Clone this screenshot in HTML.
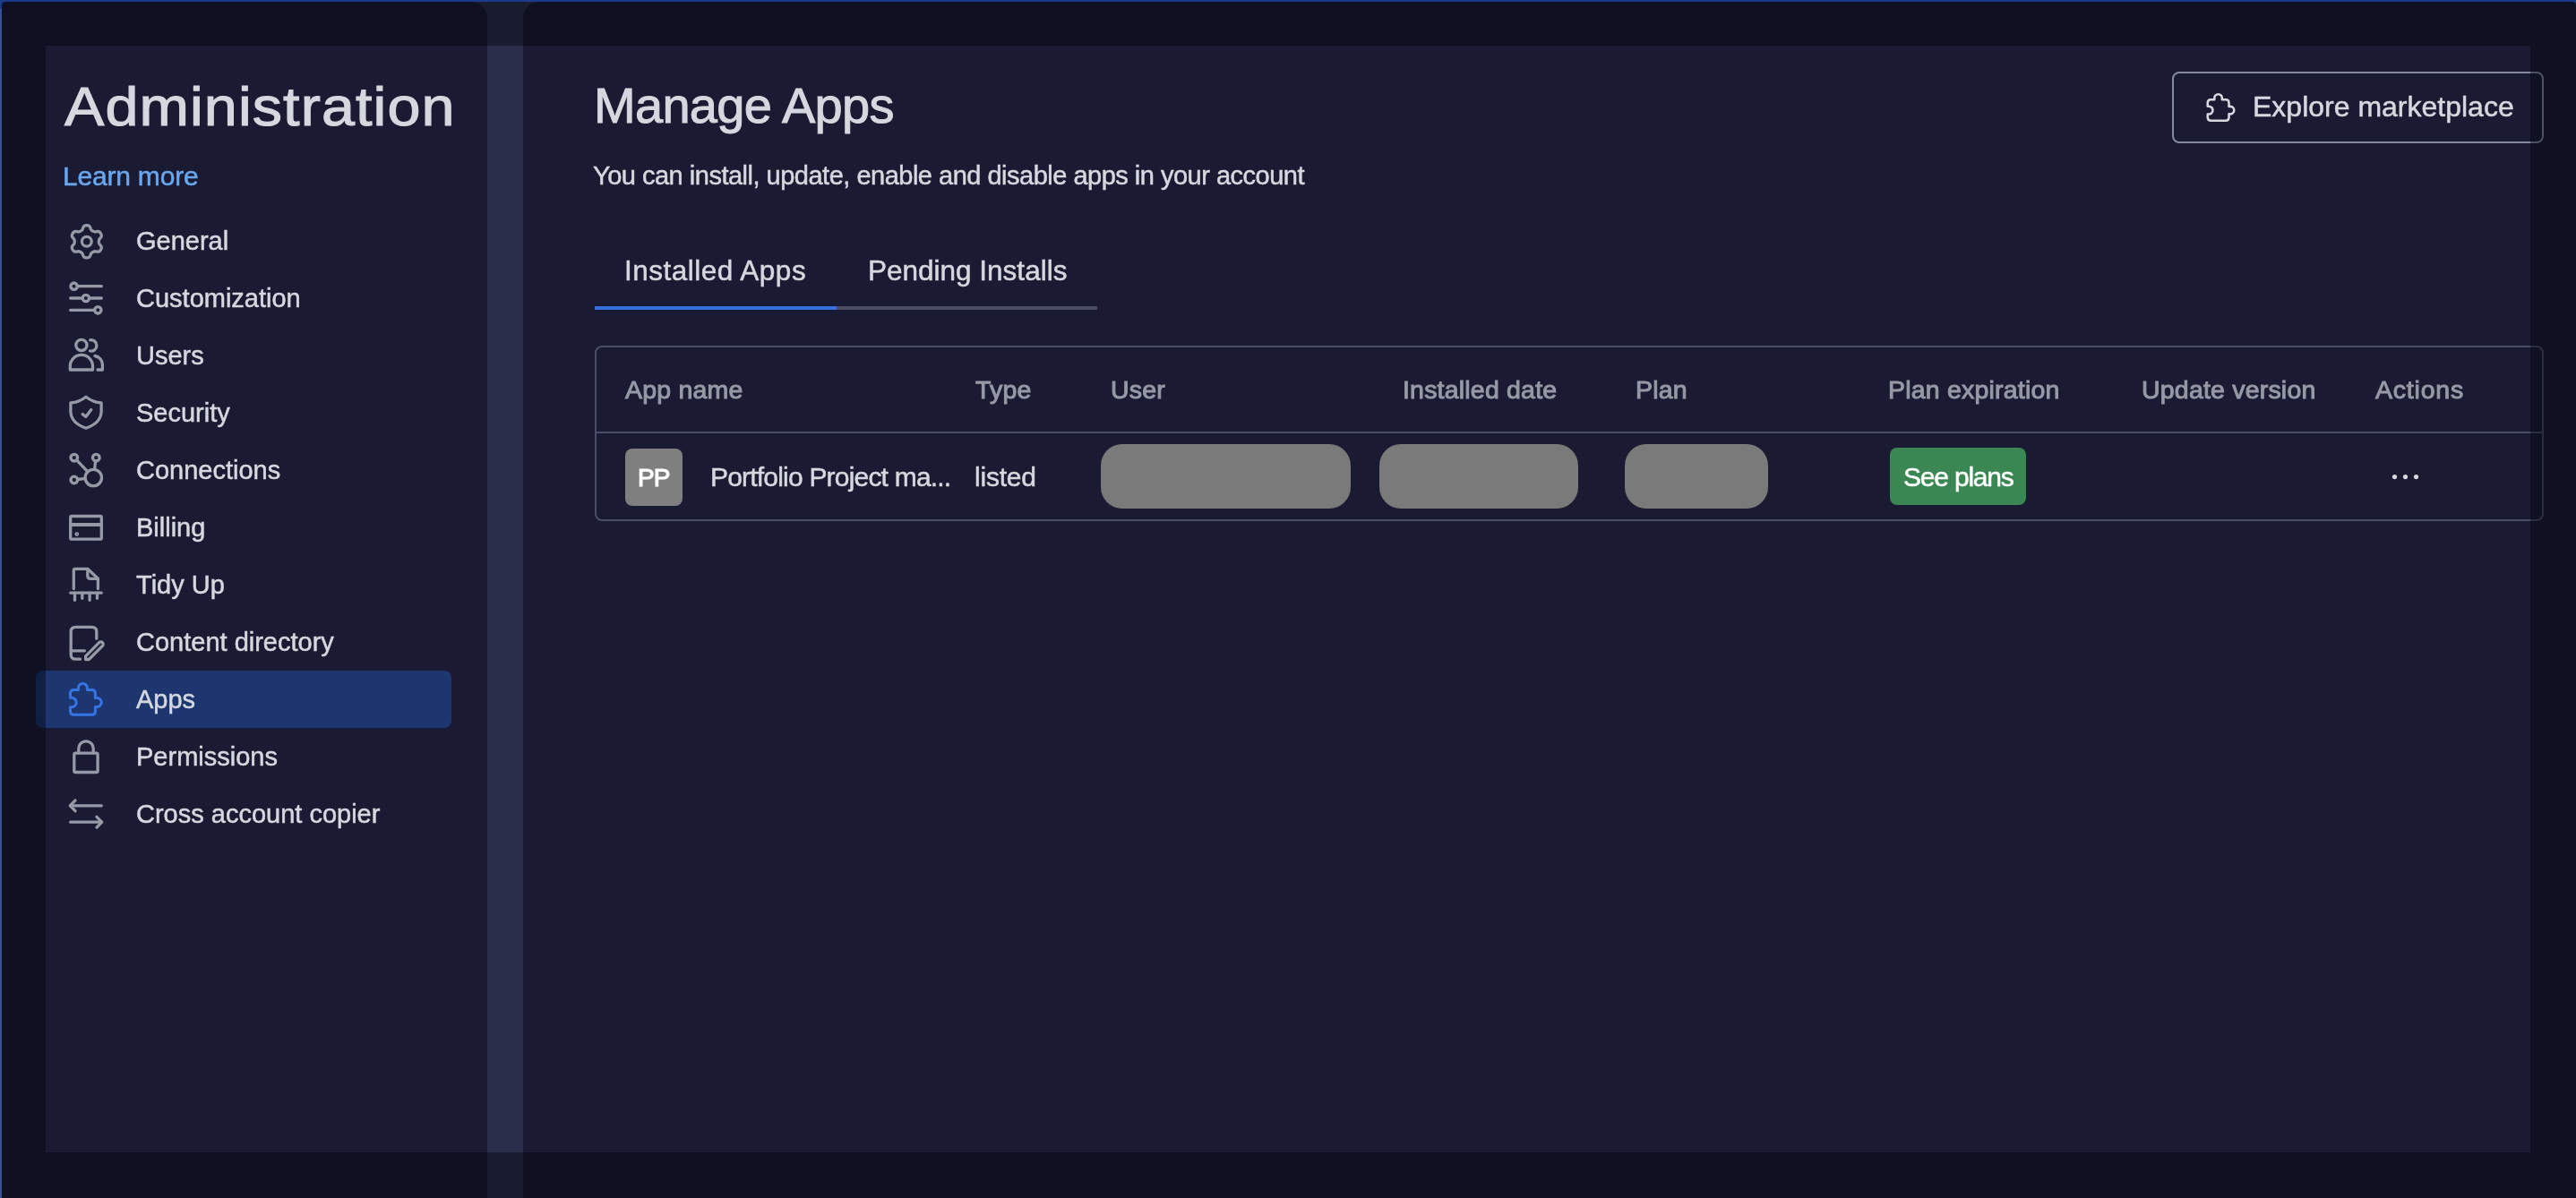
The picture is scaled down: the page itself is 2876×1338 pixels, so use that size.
<!DOCTYPE html>
<html><head><meta charset="utf-8">
<style>
html,body{margin:0;padding:0;width:2876px;height:1338px;overflow:hidden;}
body{position:relative;background:#2b2e4a;font-family:"Liberation Sans",sans-serif;}
.abs{position:absolute;}
.t{position:absolute;white-space:nowrap;color:#d5d8df;will-change:transform;-webkit-text-stroke:0.5px currentColor;}
#topbar{left:0;top:0;width:2876px;height:2px;background:#2a66e0;}
#leftbar{left:0;top:0;width:2px;height:1338px;background:#5e8ef0;}
#sidebar{left:2px;top:2px;width:542px;height:1336px;background:#1a1b32;border-radius:4px 18px 0 0;}
#main{left:584px;top:2px;width:2292px;height:1336px;background:#1a1b32;border-radius:18px 4px 0 0;}
#sel{left:40px;top:749px;width:464px;height:64px;background:#1d3670;border-radius:8px;}
.nav{font-size:29px;line-height:29px;left:152px;}
#tabline{left:664px;top:342px;width:561px;height:4px;background:#4b4e69;border-radius:1px;}
#tabblue{left:664px;top:342px;width:270px;height:4px;background:#3572e0;border-radius:1px;}
#table{left:664px;top:386px;width:2176px;height:196px;box-sizing:border-box;border:2px solid #4b4e69;border-radius:8px;}
#hsep{left:664px;top:482px;width:2176px;height:2px;background:#4b4e69;}
.th{font-size:28.5px;line-height:28.5px;font-weight:normal;color:#9699a6;top:421.2px;letter-spacing:0.2px;-webkit-text-stroke:1px currentColor;}
.td{font-size:30px;line-height:30px;top:517.9px;}
#pp{left:698px;top:501px;width:64px;height:64px;background:#7f7f7f;border-radius:8px;}
.sk{background:#7a7a7a;border-radius:24px;top:496px;height:72px;}
#seeplans{left:2110px;top:500px;width:152px;height:64px;background:#3a8753;border-radius:8px;}
#explore{left:2425px;top:80px;width:415px;height:80px;box-sizing:border-box;border:2px solid #858aa0;border-radius:8px;}
#overlay{left:51px;top:51px;width:2774px;height:1236px;box-shadow:0 0 0 4000px rgba(0,2,10,0.42);}
svg{position:absolute;left:0;top:0;}
</style></head><body>
<div id="topbar" class="abs"></div>
<div id="leftbar" class="abs"></div>
<div class="abs" style="left:0;top:0;width:10px;height:10px;background:#2a66e0;"></div>
<div class="abs" style="right:0;top:0;width:10px;height:10px;background:#2a66e0;"></div>
<div id="sidebar" class="abs"></div>
<div id="main" class="abs"></div>
<div id="sel" class="abs"></div>

<div class="t" style="left:72px;top:89px;font-size:61px;line-height:61px;letter-spacing:1px;transform:scaleX(1.09);transform-origin:0 0;-webkit-text-stroke:1.1px currentColor;">Administration</div>
<div class="t" style="left:70px;top:182px;font-size:30px;line-height:30px;letter-spacing:-0.2px;color:#69a7ef;">Learn more</div>

<div class="t nav" style="top:254.7px">General</div>
<div class="t nav" style="top:318.7px">Customization</div>
<div class="t nav" style="top:382.7px">Users</div>
<div class="t nav" style="top:446.7px">Security</div>
<div class="t nav" style="top:510.7px">Connections</div>
<div class="t nav" style="top:574.7px">Billing</div>
<div class="t nav" style="top:638.7px">Tidy Up</div>
<div class="t nav" style="top:702.7px">Content directory</div>
<div class="t nav" style="top:766.7px">Apps</div>
<div class="t nav" style="top:830.7px">Permissions</div>
<div class="t nav" style="top:894.7px">Cross account copier</div>

<div class="t" style="left:662.5px;top:90px;font-size:56px;line-height:56px;letter-spacing:-0.7px;-webkit-text-stroke:1px currentColor;">Manage Apps</div>
<div class="t" style="left:662px;top:182.3px;font-size:29px;line-height:29px;letter-spacing:-0.5px;">You can install, update, enable and disable apps in your account</div>

<div class="t" style="left:696.5px;top:287.2px;font-size:31.5px;line-height:31.5px;letter-spacing:0.5px;">Installed Apps</div>
<div class="t" style="left:968.5px;top:287.2px;font-size:31.5px;line-height:31.5px;">Pending Installs</div>
<div id="tabline" class="abs"></div>
<div id="tabblue" class="abs"></div>

<div id="table" class="abs"></div>
<div id="hsep" class="abs"></div>
<div class="t th" style="left:698px">App name</div>
<div class="t th" style="left:1089px">Type</div>
<div class="t th" style="left:1240px">User</div>
<div class="t th" style="left:1566px">Installed date</div>
<div class="t th" style="left:1826px">Plan</div>
<div class="t th" style="left:2108px">Plan expiration</div>
<div class="t th" style="left:2391px">Update version</div>
<div class="t th" style="left:2652px;letter-spacing:0.8px">Actions</div>

<div id="pp" class="abs"></div>
<div class="t" style="left:712px;top:519.6px;font-size:28px;line-height:28px;color:#fff;-webkit-text-stroke:1.1px currentColor;letter-spacing:-1px;">PP</div>
<div class="t td" style="left:793px;letter-spacing:-0.8px">Portfolio Project ma...</div>
<div class="t td" style="left:1088px;letter-spacing:-0.2px">listed</div>
<div class="abs sk" style="left:1229px;width:279px"></div>
<div class="abs sk" style="left:1540px;width:222px"></div>
<div class="abs sk" style="left:1814px;width:160px"></div>
<div id="seeplans" class="abs"></div>
<div class="t" style="left:2125px;top:517.5px;font-size:30px;line-height:30px;letter-spacing:-1.2px;color:#fff;">See plans</div>

<div id="explore" class="abs"></div>
<div class="t" style="left:2515px;top:103px;font-size:32px;line-height:32px;">Explore marketplace</div>

<svg width="2876" height="1338" viewBox="0 0 2876 1338">
<g fill="none" stroke="#9699a6" stroke-width="3.3" stroke-linecap="round" stroke-linejoin="round">
<!-- gear -->
<path d="M110.40,269.80 L110.41,270.39 L110.44,270.99 L110.55,271.61 L110.81,272.27 L111.34,273.02 L112.11,273.90 L112.83,274.85 L113.22,275.78 L113.27,276.62 L113.12,277.41 L112.84,278.15 L112.48,278.85 L112.05,279.51 L111.55,280.13 L110.95,280.65 L110.18,281.03 L109.19,281.15 L108.01,281.01 L106.86,280.78 L105.95,280.70 L105.24,280.80 L104.66,281.02 L104.12,281.29 L103.60,281.58 L103.09,281.88 L102.59,282.21 L102.11,282.61 L101.67,283.17 L101.28,284.00 L100.90,285.11 L100.44,286.21 L99.83,287.01 L99.13,287.48 L98.37,287.74 L97.59,287.86 L96.80,287.90 L96.01,287.86 L95.23,287.74 L94.47,287.48 L93.77,287.01 L93.16,286.21 L92.70,285.11 L92.32,284.00 L91.93,283.17 L91.49,282.61 L91.01,282.21 L90.51,281.88 L90.00,281.58 L89.48,281.29 L88.94,281.02 L88.36,280.80 L87.65,280.70 L86.74,280.78 L85.59,281.01 L84.41,281.15 L83.42,281.03 L82.65,280.65 L82.05,280.13 L81.55,279.51 L81.12,278.85 L80.76,278.15 L80.48,277.41 L80.33,276.62 L80.38,275.78 L80.77,274.85 L81.49,273.90 L82.26,273.02 L82.79,272.27 L83.05,271.61 L83.16,270.99 L83.19,270.39 L83.20,269.80 L83.19,269.21 L83.16,268.61 L83.05,267.99 L82.79,267.33 L82.26,266.58 L81.49,265.70 L80.77,264.75 L80.38,263.82 L80.33,262.98 L80.48,262.19 L80.76,261.45 L81.12,260.75 L81.55,260.09 L82.05,259.47 L82.65,258.95 L83.42,258.57 L84.41,258.45 L85.59,258.59 L86.74,258.82 L87.65,258.90 L88.36,258.80 L88.94,258.58 L89.48,258.31 L90.00,258.02 L90.51,257.72 L91.01,257.39 L91.49,256.99 L91.93,256.43 L92.32,255.60 L92.70,254.49 L93.16,253.39 L93.77,252.59 L94.47,252.12 L95.23,251.86 L96.01,251.74 L96.80,251.70 L97.59,251.74 L98.37,251.86 L99.13,252.12 L99.83,252.59 L100.44,253.39 L100.90,254.49 L101.28,255.60 L101.67,256.43 L102.11,256.99 L102.59,257.39 L103.09,257.72 L103.60,258.02 L104.12,258.31 L104.66,258.58 L105.24,258.80 L105.95,258.90 L106.86,258.82 L108.01,258.59 L109.19,258.45 L110.18,258.57 L110.95,258.95 L111.55,259.47 L112.05,260.09 L112.48,260.75 L112.84,261.45 L113.12,262.19 L113.27,262.98 L113.22,263.82 L112.83,264.75 L112.11,265.70 L111.34,266.58 L110.81,267.33 L110.55,267.99 L110.44,268.61 L110.41,269.21Z" stroke-width="3.3"/>
<circle cx="96.8" cy="269.8" r="5.4" stroke-width="3.3"/>
<!-- sliders -->
<circle cx="82.6" cy="319.7" r="3.7"/><line x1="86.3" y1="319.7" x2="113.3" y2="319.7"/>
<circle cx="95.9" cy="333" r="3.7"/><line x1="78.7" y1="333" x2="92.2" y2="333"/><line x1="99.6" y1="333" x2="113.3" y2="333"/>
<circle cx="109.3" cy="346.3" r="3.7"/><line x1="78.7" y1="346.3" x2="105.6" y2="346.3"/>
<!-- users -->
<circle cx="90.9" cy="385.4" r="6.1"/>
<path d="M78.3,413 L78.3,409 A12.6,12.6 0 0 1 103.5,409 L103.5,413 Z"/>
<path d="M100.6,379.8 A6.2,6.2 0 1 1 100.6,392"/>
<path d="M106,397.5 A10,10 0 0 1 114.4,407 L114.4,413 L109,413"/>
<!-- shield -->
<path d="M96,443.2 Q88,449.5 78.9,449.8 L78.9,460 Q79.5,472.5 96,478.2 Q112.5,472.5 113.1,460 L113.1,449.8 Q104,449.5 96,443.2 Z"/>
<path d="M92.2,462.6 L95.8,465.4 L101.8,457.6"/>
<!-- connections -->
<circle cx="82.8" cy="511.2" r="3.8"/>
<circle cx="107.3" cy="511.2" r="3.8"/>
<circle cx="82.8" cy="536" r="3.8"/>
<circle cx="104.3" cy="533.5" r="9.2"/>
<line x1="85.5" y1="513.9" x2="97.8" y2="526.7"/>
<line x1="106.6" y1="515" x2="105.6" y2="524.4"/>
<line x1="86.6" y1="535.5" x2="95.1" y2="534.4"/>
<!-- billing -->
<rect x="78.7" y="576.5" width="34.6" height="25.7" rx="1.5"/>
<line x1="78.7" y1="586" x2="113.3" y2="586" stroke-width="3.8"/>
<circle cx="85.8" cy="596.6" r="0.8" fill="#9699a6"/>
<!-- tidy up -->
<path d="M82.3,657.6 L82.3,637 Q82.3,635.3 84,635.3 L97.8,635.3 L109.4,646.3 L109.4,657.6"/>
<path d="M97.8,635.3 L97.8,643 Q97.8,646.3 101,646.3 L109.4,646.3"/>
<line x1="78.7" y1="662.1" x2="113.3" y2="662.1"/>
<line x1="83.5" y1="662.1" x2="83.5" y2="670.3"/><line x1="91.8" y1="662.1" x2="91.8" y2="668.3"/><line x1="100.1" y1="662.1" x2="100.1" y2="670.3"/><line x1="108.5" y1="662.1" x2="108.5" y2="668.3"/>
<!-- content directory -->
<path d="M89.5,736.2 L84.5,736.2 Q79.2,736.2 79.2,731 L79.2,705.5 Q79.2,700.3 84.5,700.3 L102.5,700.3 Q107.8,700.3 107.8,705.5 L107.8,713.2"/>
<line x1="79.2" y1="726.8" x2="94.5" y2="726.8"/>
<path d="M95.6,732.8 L110.7,717.7 A2.6,2.6 0 0 1 114.4,721.4 L99.3,736.5 L95.6,736.5 Z"/>
<!-- lock -->
<path d="M87.8,841.2 L87.8,836 A8.2,8.2 0 0 1 104.2,836 L104.2,841.2"/>
<rect x="82.8" y="841.2" width="26.3" height="21.3" rx="1.5"/>
<!-- arrows -->
<line x1="78.5" y1="899.8" x2="113.3" y2="899.8"/><path d="M84,893.9 L78.3,899.8 L84,905.7"/>
<line x1="78.7" y1="918.2" x2="113.3" y2="918.2"/><path d="M108,912.3 L113.7,918.2 L108,924.1"/>
</g>
<!-- apps puzzle -->
<g fill="none" stroke="#3674e6" stroke-width="3" stroke-linejoin="round" stroke-linecap="round">
<path d="M82.5,770.5 L87.4,770.5 L87.4,768.4 A5,5 0 0 1 97.4,768.4 L97.4,770.5 L102.4,770.5 Q106.4,770.5 106.4,774.5 L106.4,779.5 L108.2,779.5 A5,5 0 0 1 108.2,789.5 L106.4,789.5 L106.4,794.2 Q106.4,798.2 102.4,798.2 L82.5,798.2 Q78.5,798.2 78.5,794.2 L78.5,789.7 L80,789.7 A5.2,5.2 0 0 0 80,779.3 L78.5,779.3 L78.5,774.5 Q78.5,770.5 82.5,770.5 Z"/>
</g>
<!-- explore puzzle -->
<g fill="none" stroke="#d5d8df" stroke-width="3" stroke-linejoin="round" stroke-linecap="round" transform="translate(2463.5,104) scale(0.85) translate(-77,-762)">
<path d="M82.5,770.5 L87.4,770.5 L87.4,768.4 A5,5 0 0 1 97.4,768.4 L97.4,770.5 L102.4,770.5 Q106.4,770.5 106.4,774.5 L106.4,779.5 L108.2,779.5 A5,5 0 0 1 108.2,789.5 L106.4,789.5 L106.4,794.2 Q106.4,798.2 102.4,798.2 L82.5,798.2 Q78.5,798.2 78.5,794.2 L78.5,789.7 L80,789.7 A5.2,5.2 0 0 0 80,779.3 L78.5,779.3 L78.5,774.5 Q78.5,770.5 82.5,770.5 Z"/>
</g>
<!-- dots -->
<g fill="#d5d8df"><circle cx="2673.5" cy="532.6" r="2.6"/><circle cx="2685.5" cy="532.6" r="2.6"/><circle cx="2697.5" cy="532.6" r="2.6"/></g>
</svg>

<div id="overlay" class="abs"></div>
</body></html>
